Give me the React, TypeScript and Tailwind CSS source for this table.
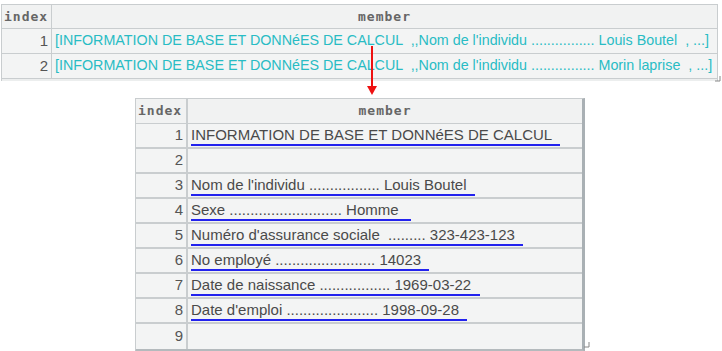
import React from "react";

const topRows = [
  "[INFORMATION DE BASE ET DONNéES DE CALCUL  ,,Nom de l'individu ................ Louis Boutel  , ...]",
  "[INFORMATION DE BASE ET DONNéES DE CALCUL  ,,Nom de l'individu ................ Morin laprise  , ...]",
];

const bottomRows = [
  "INFORMATION DE BASE ET DONNéES DE CALCUL  ",
  "",
  "Nom de l'individu ................. Louis Boutel  ",
  "Sexe ........................... Homme   ",
  "Numéro d'assurance sociale  ......... 323-423-123  ",
  "No employé ........................ 14023  ",
  "Date de naissance ................. 1969-03-22  ",
  "Date d'emploi ...................... 1998-09-28  ",
  "",
];

const mono = { fontFamily: '"DejaVu Sans Mono", monospace' };
const sans = { fontFamily: '"Liberation Sans", Arial, sans-serif' };

function Corner() {
  return (
    <svg width="6" height="6" viewBox="0 0 6 6">
      <path d="M5 0 V5 H0" stroke="#888" strokeWidth="1" fill="none" />
    </svg>
  );
}

export default function App() {
  return (
    <div className="relative w-[722px] h-[351px] bg-white overflow-hidden" style={sans}>
      {/* top table */}
      <div className="ml-[1px] mt-[4px] w-[717px] border-t border-l border-r border-[#c9cdcf] bg-[#f3f4f4]">
        <div className="flex h-[24px] border-b border-[#c9cdcf] bg-[#f1f2f2]">
          <div
            className="w-[50px] shrink-0 border-r border-[#c9cdcf] flex items-center pl-[2px] text-[13px] font-bold tracking-[1px] text-[#666]"
            style={mono}
          >
            index
          </div>
          <div
            className="flex-1 flex items-center justify-center text-[13px] font-bold tracking-[1px] text-[#666]"
            style={mono}
          >
            member
          </div>
        </div>
        {topRows.map((t, i) => (
          <div key={i} className="flex h-[25px] border-b border-[#c9cdcf]">
            <div className="w-[50px] shrink-0 border-r border-[#c9cdcf] flex items-center justify-end pr-[3px] text-[15px] text-[#555]">
              {i + 1}
            </div>
            <div className="flex-1 flex items-center pl-[3px] text-[14.3px] text-[#29bcc4] whitespace-pre">
              {t}
            </div>
          </div>
        ))}
        <div className="h-[2px] bg-[#eceeee]" />
      </div>
      <div className="absolute left-[715px] top-[76px]">
        <Corner />
      </div>

      {/* arrow */}
      <div className="absolute left-[371px] top-[46px] w-[2px] h-[42px] bg-[#ee1111]" />
      <svg className="absolute left-[367px] top-[86px]" width="10" height="10" viewBox="0 0 10 10">
        <polygon points="0,0 10,0 5,9" fill="#ee1111" />
      </svg>

      {/* bottom table */}
      <div className="ml-[135px] mt-[17px] w-[450px] border-t border-l border-[#c9cdcf] border-r-[3px] border-r-[#a9b0b4] border-b-[3px] border-b-[#b4babd] bg-[#f3f4f4]">
        <div className="flex h-[25px] border-b border-[#c9cdcf] bg-[#f1f2f2]">
          <div
            className="w-[52px] shrink-0 border-r-2 border-[#c9cdcf] flex items-center pl-[2px] text-[13px] font-bold tracking-[1px] text-[#666]"
            style={mono}
          >
            index
          </div>
          <div
            className="flex-1 flex items-center justify-center text-[13px] font-bold tracking-[1px] text-[#666]"
            style={mono}
          >
            member
          </div>
        </div>
        {bottomRows.map((t, i) => (
          <div key={i} className="flex h-[25px] border-b-2 border-[#c9cdcf] last:border-b-0">
            <div className="w-[52px] shrink-0 border-r-2 border-[#c9cdcf] flex items-center justify-end pr-[3px] text-[15px] text-[#555]">
              {i + 1}
            </div>
            <div className="flex-1 flex items-end pl-[3px] pb-[1px] text-[15px] text-[#4a4a4a] whitespace-pre">
              {t && (
                <span className="inline-block leading-[18px] border-b-2 border-[#2222ee]">{t}</span>
              )}
            </div>
          </div>
        ))}
      </div>
      <div className="absolute left-[584px] top-[342px]">
        <Corner />
      </div>
    </div>
  );
}
